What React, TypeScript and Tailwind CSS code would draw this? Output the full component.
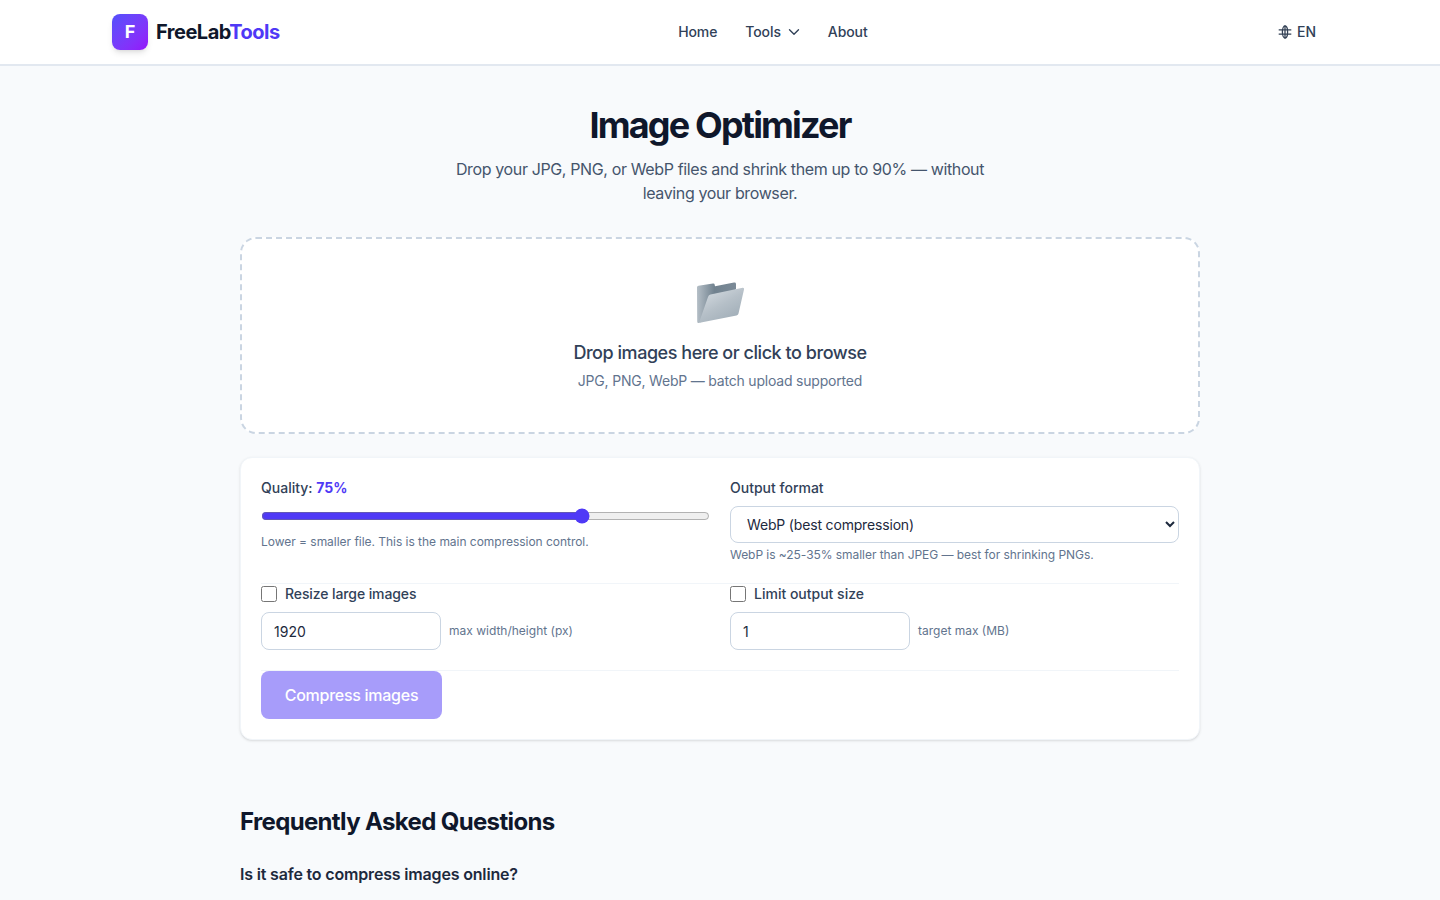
import { ChevronDown } from "lucide-react";

const font = { fontFamily: "Inter, 'Liberation Sans', sans-serif" };

function GlobeMark() {
  return (
    <svg width="14" height="14" viewBox="0 0 14 14" fill="none" stroke="#334155" strokeWidth="1.3">
      <ellipse cx="7" cy="7" rx="2.6" ry="6" />
      <path d="M7 .5v13M.7 4.9h12.6M.7 9.1h12.6" />
    </svg>
  );
}

function FolderEmoji() {
  return (
    <svg width="50" height="48" viewBox="0 0 50 48" className="translate-x-[1px]">
      <defs>
        <linearGradient id="back" x1="0" y1="0" x2="1" y2="0">
          <stop offset="0" stopColor="#b4bec6" />
          <stop offset="0.45" stopColor="#71828f" />
          <stop offset="1" stopColor="#7b8a97" />
        </linearGradient>
        <linearGradient id="front" x1="0" y1="0" x2="0.7" y2="1">
          <stop offset="0" stopColor="#dbe1e6" />
          <stop offset="0.55" stopColor="#b6c0c8" />
          <stop offset="1" stopColor="#a0adb7" />
        </linearGradient>
      </defs>
      <path d="M1 10.5 Q1 9 2.5 8.8 L17 6.5 Q18.5 6.3 18.6 7.6 L19 9.2 L38 5.6 Q40 5.3 40 7 L40 12 L14 40 L3 46 Q1.2 46.4 1.2 44.5 Z" fill="url(#back)" />
      <path d="M14.5 17.6 L46.6 10.8 Q48.5 10.6 48 12.4 L42.5 36.5 Q42.2 38 40.5 38.4 L5 45.6 Q3 46 3.6 44 L12 20 Q12.7 18 14.5 17.6 Z" fill="url(#front)" />
    </svg>
  );
}

export default function App() {
  return (
    <div className="h-[900px] overflow-hidden bg-slate-50 text-slate-900" style={font}>
      <header className="h-[66px] bg-white border-b-2 border-slate-200">
        <div className="max-w-[1280px] mx-auto px-8 h-16 flex items-center justify-between">
          <div className="flex items-center gap-2">
            <div className="w-9 h-9 rounded-lg bg-gradient-to-br from-[#5250fb] to-[#9510fa] text-white font-bold text-lg flex items-center justify-center shadow-md">
              F
            </div>
            <span className="text-xl font-bold tracking-tight">
              FreeLab<span className="text-indigo-600">Tools</span>
            </span>
          </div>
          <nav className="flex items-center gap-7 text-sm font-medium tracking-[-0.1px] text-slate-700">
            <a>Home</a>
            <a className="flex items-center gap-1">
              Tools <ChevronDown size={18} strokeWidth={1.8} className="-mr-[3px]" />
            </a>
            <a>About</a>
          </nav>
          <button className="flex items-center gap-[5px] px-3 text-sm font-medium text-slate-700">
            <GlobeMark />
            EN
          </button>
        </div>
      </header>

      <main className="max-w-[960px] mx-auto pt-[39px]">
        <div className="text-center mb-8">
          <h1 className="text-4xl font-bold tracking-[-1.83px] mb-3">Image Optimizer</h1>
          <p className="text-base tracking-[-0.37px] text-slate-600 max-w-[560px] mx-auto">
            Drop your JPG, PNG, or WebP files and shrink them up to 90% — without leaving your browser.
          </p>
        </div>

        <div className="h-[197px] mb-6 bg-white border-2 border-dashed border-slate-300 rounded-2xl flex flex-col items-center pt-[38px]">
          <FolderEmoji />
          <p className="mt-[14px] text-lg font-medium tracking-[-0.46px] text-slate-700">Drop images here or click to browse</p>
          <p className="mt-1 text-sm tracking-[-0.2px] text-slate-500">JPG, PNG, WebP — batch upload supported</p>
        </div>

        <div className="bg-white border border-slate-100 rounded-xl shadow p-5 -mt-[1px]">
          <div className="grid grid-cols-2 gap-x-5">
            <div className="h-[105px]">
              <label className="block text-sm font-medium text-slate-700 mb-[10px]">
                Quality: <span className="font-bold text-indigo-600">75%</span>
              </label>
              <input type="range" min={10} max={100} defaultValue={75} className="block w-full h-4 my-0 accent-indigo-600" />
              <p className="mt-2.5 text-xs tracking-[-0.03px] text-slate-500">Lower = smaller file. This is the main compression control.</p>
            </div>
            <div>
              <label className="block text-sm font-medium text-slate-700 mb-2">Output format</label>
              <select className="block w-full h-[37px] px-3 text-sm tracking-[-0.17px] bg-white border border-slate-300 rounded-lg text-slate-800">
                <option>WebP (best compression)</option>
              </select>
              <p className="mt-1 text-xs tracking-[-0.05px] text-slate-500">WebP is ~25-35% smaller than JPEG — best for shrinking PNGs.</p>
            </div>
          </div>

          <div className="grid grid-cols-2 gap-x-5 border-t border-slate-100 h-[87px]">
            <div>
              <label className="flex items-center gap-2 text-sm font-medium tracking-[-0.1px] text-slate-700 h-5">
                <input type="checkbox" className="w-4 h-4" />
                Resize large images
              </label>
              <div className="flex items-center gap-2 mt-2">
                <input defaultValue="1920" className="w-[180px] h-[38px] px-3 text-sm border border-slate-300 rounded-lg text-slate-800" />
                <span className="text-xs text-slate-500">max width/height (px)</span>
              </div>
            </div>
            <div>
              <label className="flex items-center gap-2 text-sm font-medium text-slate-700 h-5">
                <input type="checkbox" className="w-4 h-4" />
                Limit output size
              </label>
              <div className="flex items-center gap-2 mt-2">
                <input defaultValue="1" className="w-[180px] h-[38px] px-3 text-sm border border-slate-300 rounded-lg text-slate-800" />
                <span className="text-xs text-slate-500">target max (MB)</span>
              </div>
            </div>
          </div>

          <div className="border-t border-slate-100">
            <button className="w-[181px] h-12 rounded-lg bg-indigo-600/50 text-white font-medium tracking-[-0.27px]">Compress images</button>
          </div>
        </div>

        <section className="mt-[66px]">
          <h2 className="text-2xl font-bold tracking-[-0.65px] mb-6">Frequently Asked Questions</h2>
          <h3 className="font-semibold tracking-[-0.17px] text-slate-800 mb-[9px]">Is it safe to compress images online?</h3>
          <p className="text-slate-600 text-base tracking-[-0.3px]">
            Yes. Your images are compressed locally in your browser, so the files are never uploaded to a server or shared with anyone else.
          </p>
        </section>
      </main>
    </div>
  );
}
